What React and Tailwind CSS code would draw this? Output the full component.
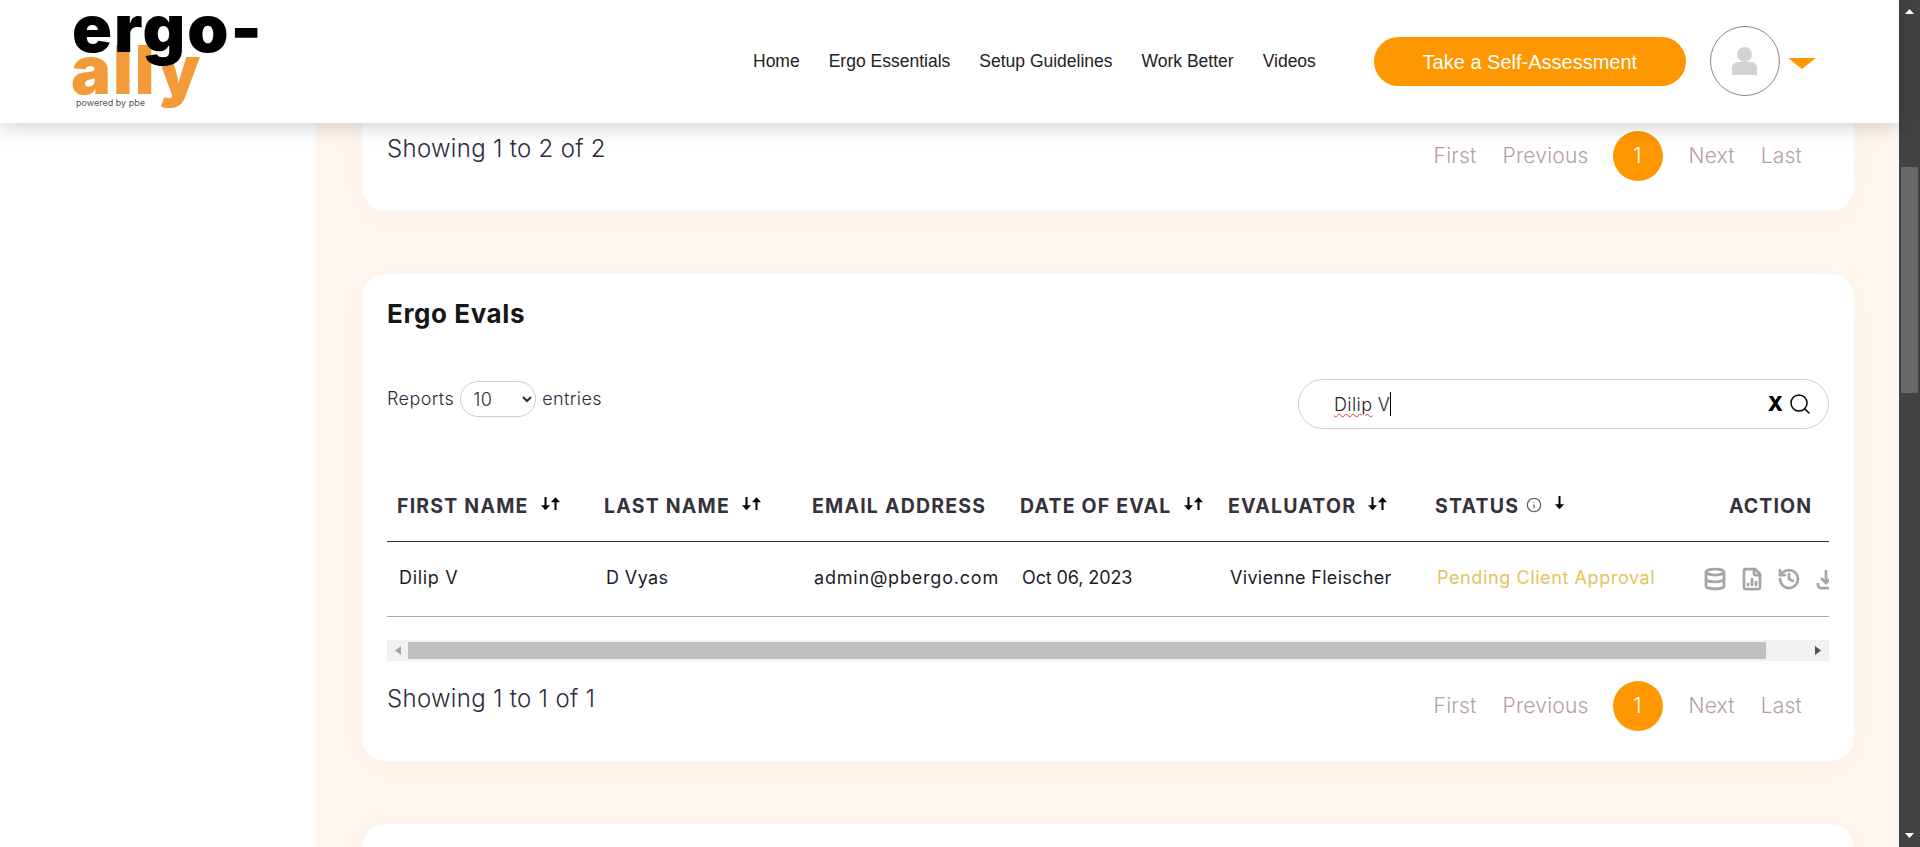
import { Database, FileChartColumn, History, Info, Search } from "lucide-react";

function SortIcon() {
  return (
    <svg width="21" height="14" viewBox="0 0 21 14" className="inline-block" fill="none" stroke="#000" strokeWidth="2">
      <path d="M5.5 0v12" />
      <path d="M1.5 8.5L5.5 13l4-4.5z" fill="#000" strokeWidth="0.5" />
      <path d="M15.5 13V2" />
      <path d="M11.5 5L15.5 0.5l4 4.5z" fill="#000" strokeWidth="0.5" />
    </svg>
  );
}

function DownArrow() {
  return (
    <svg width="11" height="14" viewBox="0 0 11 14" fill="none" stroke="#000" strokeWidth="2">
      <path d="M5.5 0v12" />
      <path d="M1.5 8.5L5.5 13l4-4.5z" fill="#000" strokeWidth="0.5" />
    </svg>
  );
}

function Pagination({ showing }) {
  return (
    <div className="flex justify-between pl-[25px] pr-[52px]">
      <div className="pt-[3px] text-[24px] leading-[30px] font-light text-[#2b2b3a] tracking-[0.3px]">{showing}</div>
      <div className="flex items-center text-[21px] font-light tracking-[0.2px] text-[#b5a0a0]">
        <span>First</span>
        <span className="ml-[26px]">Previous</span>
        <span className="ml-[24px] flex h-[50px] w-[50px] items-center justify-center rounded-full bg-[#ff9800] text-white">1</span>
        <span className="ml-[26px]">Next</span>
        <span className="ml-[26px]">Last</span>
      </div>
    </div>
  );
}

function Th({ children, sort, className = "" }) {
  return (
    <th className={"pl-[10px] pt-[3px] text-left text-[19.5px] font-bold tracking-[1.2px] text-[#35323c] whitespace-nowrap " + className}>
      {children}
      {sort && <span className="ml-[11px] relative -top-[4px]"><SortIcon /></span>}
    </th>
  );
}

export default function App() {
  return (
    <div className="flex h-[847px] w-[1920px] overflow-hidden bg-white font-['Inter',sans-serif]">
      <div className="flex w-[1899px] flex-col">
        {/* header */}
        <header className="relative z-10 flex h-[123px] shrink-0 items-center bg-white shadow-[0_4px_20px_rgba(0,0,0,0.18)] font-['Liberation_Sans',sans-serif]">
          <div className="relative h-[123px] w-[320px] font-['Inter',sans-serif]">
            <span className="absolute left-[71px] top-[45px] text-[67px] leading-[50px] font-black tracking-[0.03em] text-[#f39b38]">ally</span>
            <span className="absolute left-[72px] top-[3px] text-[66px] leading-[50px] font-black tracking-[0.03em] text-black">ergo-</span>
            <span className="absolute left-[76px] top-[98px] text-[9px] leading-[10px] text-[#555]">powered by pbe</span>
          </div>
          <nav className="ml-[433px] flex gap-[29px] text-[17.5px] text-[#222]">
            <span>Home</span>
            <span>Ergo Essentials</span>
            <span>Setup Guidelines</span>
            <span>Work Better</span>
            <span>Videos</span>
          </nav>
          <button className="ml-[58px] h-[49px] w-[312px] rounded-full bg-[#ff9800] text-[20px] text-white">Take a Self-Assessment</button>
          <div className="mb-[2px] ml-[24px] flex h-[70px] w-[70px] items-center justify-center rounded-full border border-[#888]">
            <svg width="25" height="28" viewBox="0 0 25 28" fill="#d3d3d3">
              <circle cx="12.5" cy="7.5" r="7.5" />
              <path d="M0 28v-7c0-4 3-6 6-6h13c3 0 6 2 6 6v7z" />
            </svg>
          </div>
          <svg width="28" height="11" viewBox="0 0 28 11" className="ml-[8px] mt-[4px]" fill="#ff9800">
            <path d="M0 0h28L14 11z" />
          </svg>
        </header>

        <div className="flex min-h-0 flex-1">
          <aside className="w-[316px] shrink-0 bg-white" />
          <main className="min-w-0 flex-1 bg-[#fff7f0] pl-[46px] pr-[45px]">
            {/* previous table, scrolled under the header */}
            <section className="rounded-b-[24px] bg-white pt-[8px] pb-[30px] shadow-[0_6px_30px_rgba(255,150,60,0.08)]">
              <Pagination showing="Showing 1 to 2 of 2" />
            </section>

            {/* Ergo Evals */}
            <section className="mt-[63px] rounded-[24px] bg-white pt-[25px] pb-[30px] shadow-[0_6px_30px_rgba(255,150,60,0.08)]">
              <h2 className="pl-[25px] text-[26px] leading-[30px] font-bold tracking-[0.6px] text-[#161616]">Ergo Evals</h2>

              <div className="mt-[50px] flex justify-between pl-[25px] pr-[25px]">
                <div className="mt-[2px] flex h-[36px] items-center gap-[6px] text-[18px] font-light tracking-[0.4px] text-[#2b2b3a]">
                  <span className="pb-[2px]">Reports</span>
                  <select className="h-[36px] w-[76px] rounded-full border border-[#ccc] bg-white pl-[8px] text-[18px] font-light outline-none">
                    <option>10</option>
                  </select>
                  <span className="pb-[2px]">entries</span>
                </div>
                <div className="flex h-[50px] w-[531px] items-center rounded-full border border-[#ccc] pl-[35px] pr-[16px]">
                  <span className="pt-[1px] text-[18px] font-light tracking-[0.4px] text-[#222]">
                    <span className="underline decoration-wavy decoration-[#e33] decoration-1 underline-offset-2">Dilip</span> V
                  </span>
                  <span className="h-[24px] w-px bg-black" />
                  <span className="ml-auto text-[20px] font-extrabold text-black">X</span>
                  <Search size={24} strokeWidth={1.5} color="#000" className="ml-[5px]" />
                </div>
              </div>

              {/* table */}
              <div className="mx-[25px] mt-[41px] overflow-hidden">
                <table className="w-[1485px] table-fixed border-collapse">
                  <thead>
                    <tr className="h-[71px] border-b-[1.5px] border-[#333]">
                      <Th sort className="w-[207px]">FIRST NAME</Th>
                      <Th sort className="w-[208px]">LAST NAME</Th>
                      <Th className="w-[208px]">EMAIL ADDRESS</Th>
                      <Th sort className="w-[208px]">DATE OF EVAL</Th>
                      <Th sort className="w-[207px]">EVALUATOR</Th>
                      <Th className="w-[205px]">
                        STATUS
                        <Info size={16} color="#666" className="ml-[7px] relative -top-[3px] inline-block" />
                        <span className="ml-[12px] relative -top-[3px] inline-block"><DownArrow /></span>
                      </Th>
                      <th className="pl-[99px] pt-[3px] text-left text-[19.5px] font-bold tracking-[1.1px] text-[#35323c]">ACTION</th>
                    </tr>
                  </thead>
                  <tbody>
                    <tr className="h-[75px] border-b border-[#aaa] text-[18px] font-normal tracking-[0.4px] text-[#1c1c28]">
                      <td className="pl-[12px] pb-[3px] tracking-[0.7px]">Dilip V</td>
                      <td className="pl-[12px] pb-[3px]">D Vyas</td>
                      <td className="pl-[12px] pb-[3px] tracking-[0.8px]">admin@pbergo.com</td>
                      <td className="pl-[12px] pb-[3px] tracking-[-0.1px]">Oct 06, 2023</td>
                      <td className="pl-[12px] pb-[3px] tracking-[0.3px]">Vivienne Fleischer</td>
                      <td className="pl-[12px] pb-[3px] text-[#e3c45d] tracking-[0.6px] whitespace-nowrap">Pending Client Approval</td>
                      <td className="pl-[73px]">
                        <div className="flex items-center gap-[13px] text-[#a6a6a6]">
                          <Database size={24} strokeWidth={2.75} className="shrink-0" />
                          <FileChartColumn size={24} strokeWidth={2.75} className="shrink-0" />
                          <History size={24} strokeWidth={2.75} className="shrink-0" />
                          <svg width="24" height="24" viewBox="0 0 24 24" className="shrink-0" fill="none" stroke="currentColor" strokeWidth="2.75">
                            <path d="M12 3v12M7 11l5 5 5-5M4 16v2a3 3 0 0 0 3 3h10a3 3 0 0 0 3-3v-2" />
                          </svg>
                        </div>
                      </td>
                    </tr>
                  </tbody>
                </table>
                {/* horizontal scrollbar */}
                <div className="mt-[23px] flex h-[21px] items-center bg-[#f1f1f1]">
                  <div className="flex w-[21px] justify-center">
                    <svg width="6" height="9" viewBox="0 0 6 9" fill="#a3a3a3"><path d="M6 0v9L0 4.5z" /></svg>
                  </div>
                  <div className="h-[17px] w-[1358px] bg-[#c1c1c1]" />
                  <div className="flex flex-1 justify-end pr-[8px]">
                    <svg width="6" height="9" viewBox="0 0 6 9" fill="#505050"><path d="M0 0v9l6-4.5z" /></svg>
                  </div>
                </div>
              </div>

              <div className="mt-[20px]">
                <Pagination showing="Showing 1 to 1 of 1" />
              </div>
            </section>

            <section className="mt-[63px] h-[200px] rounded-[24px] bg-white shadow-[0_6px_30px_rgba(255,150,60,0.08)]" />
          </main>
        </div>
      </div>

      {/* page scrollbar */}
      <div className="flex h-full w-[21px] shrink-0 flex-col items-center bg-[#424242]">
        <svg width="9" height="5" viewBox="0 0 9 5" fill="#fff" className="mt-[9px]"><path d="M0 5h9L4.5 0z" /></svg>
        <div className="mt-[153px] h-[226px] w-[17px] bg-[#686868]" />
        <svg width="9" height="5" viewBox="0 0 9 5" fill="#fff" className="mt-auto mb-[9px]"><path d="M0 0h9L4.5 5z" /></svg>
      </div>
    </div>
  );
}
